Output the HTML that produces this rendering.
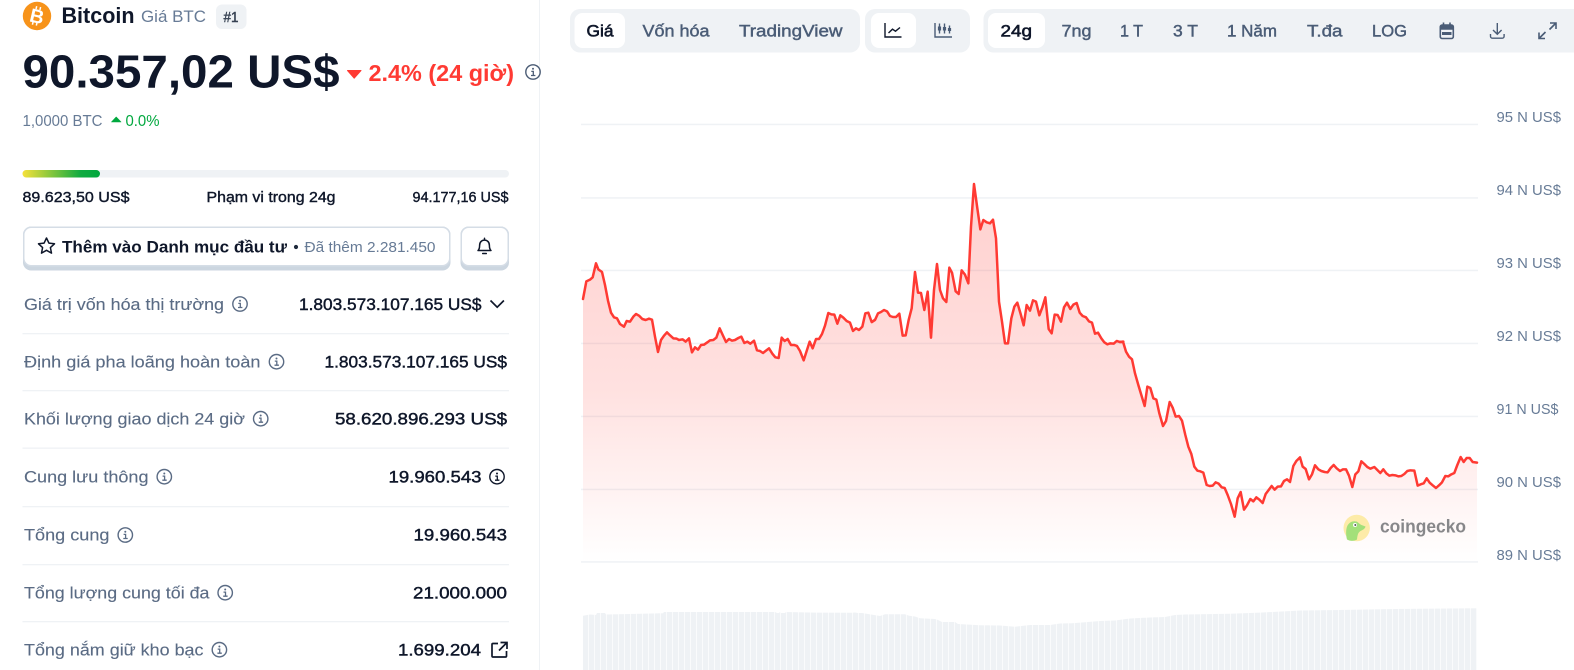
<!DOCTYPE html>
<html lang="vi">
<head>
<meta charset="utf-8">
<title>Bitcoin</title>
<style>
html,body{margin:0;padding:0;background:#fff;width:1574px;height:670px;overflow:hidden}
svg{display:block;font-family:"Liberation Sans",Arial,sans-serif}
.d{fill:#0f172a}
.g{fill:#4b5c75}
.l{fill:#5a6b84;font-size:17px;stroke:#5a6b84;stroke-width:.12}
.v{fill:#0f172a;font-size:17px;stroke:#0f172a;stroke-width:.45}
.t{fill:#4a5c76;font-size:17px;stroke:#4a5c76;stroke-width:.45}
.y{fill:#677b96;font-size:15px}
.ic{fill:none;stroke:#4b5c75;stroke-width:1.5}
</style>
</head>
<body>
<svg width="1574" height="670" viewBox="0 0 1574 670" xmlns="http://www.w3.org/2000/svg">
<defs>
<g id="info"><circle r="7.2" fill="none" stroke-width="1.4"/><path d="M-1.7-.6H.3V3.4M-2 3.5H2.4" fill="none" stroke-width="1.3"/><circle cy="-3.2" r="1" stroke="none"/></g>
<linearGradient id="fg" gradientUnits="userSpaceOnUse" x1="0" y1="185" x2="0" y2="562">
<stop offset="0" stop-color="#ff3a33" stop-opacity=".24"/>
<stop offset=".55" stop-color="#ff3a33" stop-opacity=".15"/>
<stop offset="1" stop-color="#ff3a33" stop-opacity="0"/>
</linearGradient>
<linearGradient id="rg" x1="0" x2="1" y1="0" y2="0"><stop offset="0" stop-color="#f6e13a"/><stop offset=".75" stop-color="#10ab40"/><stop offset="1" stop-color="#00a83e"/></linearGradient>
<pattern id="vb" patternUnits="userSpaceOnUse" x="583" y="0" width="6" height="10"><rect width="5" height="10" fill="#eff2f5"/><rect x="5" width="1" height="10" fill="#fafbfc"/></pattern>
<clipPath id="cc">
<polygon transform="translate(575 170) scale(.33333)" points="24,387 34,334 45,329 53,322 63,280 70,298 81,306 90,345 99,392 108,428 117,442 126,445 135,462 147,470 155,453 165,455 175,440 183,432 192,437 202,447 212,450 222,446 231,449 240,500 249,546 258,510 267,497 276,487 285,496 295,505 305,506 312,510 323,508 332,515 342,505 351,547 360,532 369,539 378,525 387,524 397,517 405,511 415,510 424,503 434,475 444,497 453,516 462,507 471,512 480,510 490,504 499,500 508,519 517,515 526,521 537,512 546,541 555,543 564,549 573,542 582,535 592,551 601,562 611,564 620,503 629,513 638,507 648,525 657,525 666,528 675,543 686,571 695,543 704,515 713,535 723,507 732,507 741,492 750,467 760,429 769,433 778,434 787,461 796,436 805,443 815,453 825,458 834,483 843,475 852,480 862,470 871,430 880,428 890,456 899,450 899,1176 24,1176"/>
<polygon transform="translate(870 170) scale(.33333)" points="6,456 15,450 24,430 33,426 42,420 51,424 60,438 69,441 78,441 88,431 98,497 107,496 116,450 125,415 135,306 144,368 153,369 163,420 173,365 183,503 192,360 201,282 210,360 219,385 229,396 238,293 246,308 257,364 266,372 275,301 285,314 295,340 303,170 312,42 322,115 331,178 340,150 350,157 360,160 369,149 378,205 387,395 396,455 405,520 414,520 424,445 433,410 442,398 452,432 461,466 470,405 480,422 489,391 498,395 508,436 517,412 526,382 536,477 545,490 554,434 563,435 573,455 582,412 591,398 601,417 610,404 620,399 629,428 638,438 648,442 657,454 666,458 675,491 684,488 694,505 703,517 712,523 721,520 731,521 740,513 749,516 760,515 760,1176 6,1176"/>
<polygon transform="translate(1120 330) scale(.33333)" points="0,36 9,35 18,65 27,80 36,88 45,130 55,165 64,195 74,228 82,170 91,174 100,205 109,209 118,250 129,288 138,273 149,216 158,233 167,260 177,258 186,272 196,315 205,350 214,372 223,410 232,422 241,424 250,428 260,465 269,468 278,467 287,457 296,461 305,472 314,474 323,495 333,522 344,560 353,505 362,486 372,539 381,526 391,507 400,514 409,502 418,509 428,519 437,492 446,480 455,468 464,479 473,470 483,469 492,453 501,448 510,456 520,408 529,393 540,382 548,410 557,417 567,448 576,433 585,406 595,418 604,423 614,426 623,427 632,414 641,405 650,415 660,423 669,418 678,418 687,437 697,471 706,433 715,424 724,394 733,402 742,411 751,416 763,411 772,420 781,429 790,418 799,430 808,437 817,435 826,436 835,439 844,438 853,432 862,423 871,421 883,422 893,467 902,463 911,460 920,445 929,458 938,466 948,474 957,466 966,457 976,438 985,439 994,433 1003,429 1012,405 1022,381 1031,396 1040,384 1049,384 1058,396 1071,398 1071,696 0,696"/>
</clipPath>
</defs>

<!-- divider -->
<rect x="539" y="0" width="1" height="670" fill="#eff2f5"/>

<!-- header -->
<circle cx="37" cy="16" r="14.2" fill="#f7931a"/>
<g transform="rotate(13 37 16)" stroke="#fff" stroke-width="1.5">
<path d="M34.5 6.5v3M38.5 6.500v3M34.5 22.500v3M38.500 22.500v3"/>
<text x="30" y="23" font-size="19.500" font-weight="700" fill="#fff" stroke="none">B</text>
</g>
<text x="61.500" y="23" font-size="22" font-weight="700" class="d" textLength="73" lengthAdjust="spacingAndGlyphs">Bitcoin</text>
<text x="141" y="22" font-size="16.500" fill="#677b96" textLength="65" lengthAdjust="spacingAndGlyphs">Giá BTC</text>
<rect x="216" y="4.500" width="30.500" height="24.500" rx="6" fill="#eff2f5"/>
<text x="223.500" y="22" font-size="14.500" fill="#364152" stroke="#364152" stroke-width=".4" textLength="15" lengthAdjust="spacingAndGlyphs">#1</text>

<!-- price -->
<text x="22.500" y="87.300" font-size="46" font-weight="700" class="d" textLength="317" lengthAdjust="spacingAndGlyphs">90.357,02 US$</text>
<path d="M347.500 70.500H361L354.200 78.200Z" fill="#ff3a33" stroke="#ff3a33" stroke-linejoin="round"/>
<text x="368.500" y="81" font-size="23.500" font-weight="700" fill="#ff3a33" textLength="145.500" lengthAdjust="spacingAndGlyphs">2.4% (24 giờ)</text>
<use href="#info" transform="translate(533 72)" fill="#4b5c75" stroke="#4b5c75"/>

<text x="22.500" y="126" font-size="15.500" fill="#677b96" textLength="80" lengthAdjust="spacingAndGlyphs">1,0000 BTC</text>
<path d="M111.500 122H121L116.200 117Z" fill="#00a83e" stroke="#00a83e" stroke-linejoin="round" stroke-width=".6"/>
<text x="125.500" y="126" font-size="15.500" fill="#00a83e" textLength="34" lengthAdjust="spacingAndGlyphs">0.0%</text>

<!-- range -->
<rect x="22.500" y="170" width="486.500" height="7.500" rx="3.750" fill="#eff2f5"/>
<rect x="22.500" y="170" width="77.500" height="7.500" rx="3.750" fill="url(#rg)"/>
<g font-size="15.200" class="d" stroke="#0f172a" stroke-width=".4">
<text x="22.500" y="202" textLength="107" lengthAdjust="spacingAndGlyphs">89.623,50 US$</text>
<text x="206.500" y="202" textLength="129" lengthAdjust="spacingAndGlyphs">Phạm vi trong 24g</text>
<text x="412.500" y="202" textLength="96" lengthAdjust="spacingAndGlyphs">94.177,16 US$</text>
</g>

<!-- buttons -->
<rect x="23" y="226.500" width="427.500" height="44" rx="8" fill="#ccd6e0"/>
<rect x="23.750" y="227.250" width="426" height="38.500" rx="7.500" fill="#fff" stroke="#d5dde6" stroke-width="1.500"/>
<rect x="460.500" y="226.500" width="48.500" height="44" rx="8" fill="#ccd6e0"/>
<rect x="461.250" y="227.250" width="47" height="38.500" rx="7.500" fill="#fff" stroke="#d5dde6" stroke-width="1.500"/>
<path d="M46.500 238l2.400 5.100 5.600.7-4.100 3.800 1.100 5.500-5-2.800-5 2.800 1.100-5.500-4.100-3.800 5.600-.7z" fill="none" stroke="#0f172a" stroke-width="1.500" stroke-linejoin="round"/>
<text x="62" y="252.300" font-size="17" font-weight="700" class="d" textLength="225" lengthAdjust="spacingAndGlyphs">Thêm vào Danh mục đầu tư</text>
<circle cx="296" cy="247" r="2.100" fill="#1f2a3c"/>
<text x="304.500" y="252" font-size="15.200" fill="#677b96" textLength="131" lengthAdjust="spacingAndGlyphs">Đã thêm 2.281.450</text>
<path d="M478 250.500c1.300-1.200 1.600-2.500 1.600-5 0-3.300 2-5.400 4.900-5.400s4.900 2.100 4.900 5.400c0 2.500.3 3.800 1.600 5zM484.500 240v-1.800M482.700 253.500h3.600" fill="none" stroke="#0f172a" stroke-width="1.500" stroke-linejoin="round" stroke-linecap="round"/>

<!-- stats -->
<g fill="#eff2f5">
<rect x="22.500" y="333" width="486.500" height="1.300"/>
<rect x="22.500" y="390" width="486.500" height="1.300"/>
<rect x="22.500" y="447.500" width="486.500" height="1.300"/>
<rect x="22.500" y="506" width="486.500" height="1.300"/>
<rect x="22.500" y="564" width="486.500" height="1.300"/>
<rect x="22.500" y="621" width="486.500" height="1.300"/>
</g>
<g fill="#5a6b84" stroke="#5a6b84">
<use href="#info" transform="translate(240 304)"/>
<use href="#info" transform="translate(276.500 361.700)"/>
<use href="#info" transform="translate(260.700 418.700)"/>
<use href="#info" transform="translate(164.300 476.700)"/>
<use href="#info" transform="translate(125.300 535)"/>
<use href="#info" transform="translate(225.200 592.700)"/>
<use href="#info" transform="translate(219.400 649.700)"/>
</g>
<text class="l" x="24" y="310" textLength="200" lengthAdjust="spacingAndGlyphs">Giá trị vốn hóa thị trường</text>
<text class="l" x="24" y="367.500" textLength="236.500" lengthAdjust="spacingAndGlyphs">Định giá pha loãng hoàn toàn</text>
<text class="l" x="24" y="424.500" textLength="221" lengthAdjust="spacingAndGlyphs">Khối lượng giao dịch 24 giờ</text>
<text class="l" x="24" y="482.500" textLength="124.500" lengthAdjust="spacingAndGlyphs">Cung lưu thông</text>
<text class="l" x="24" y="540.500" textLength="85.500" lengthAdjust="spacingAndGlyphs">Tổng cung</text>
<text class="l" x="24" y="598.500" textLength="185.500" lengthAdjust="spacingAndGlyphs">Tổng lượng cung tối đa</text>
<text class="l" x="24" y="655.500" textLength="179.500" lengthAdjust="spacingAndGlyphs">Tổng nắm giữ kho bạc</text>

<text class="v" x="299" y="310" textLength="182.500" lengthAdjust="spacingAndGlyphs">1.803.573.107.165 US$</text>
<text class="v" x="324.500" y="367.500" textLength="182.500" lengthAdjust="spacingAndGlyphs">1.803.573.107.165 US$</text>
<text class="v" x="335" y="424.500" textLength="172" lengthAdjust="spacingAndGlyphs">58.620.896.293 US$</text>
<text class="v" x="388.500" y="482.500" textLength="93" lengthAdjust="spacingAndGlyphs">19.960.543</text>
<text class="v" x="413.500" y="540.500" textLength="93.500" lengthAdjust="spacingAndGlyphs">19.960.543</text>
<text class="v" x="413" y="598.500" textLength="94" lengthAdjust="spacingAndGlyphs">21.000.000</text>
<text class="v" x="398" y="655.500" textLength="83" lengthAdjust="spacingAndGlyphs">1.699.204</text>

<path d="M490.500 300.500l6.700 6.700 6.700-6.700" fill="none" stroke="#0f172a" stroke-width="1.700"/>
<use href="#info" transform="translate(497 476.700)" fill="#0f172a" stroke="#0f172a"/>
<path d="M498 643.500h-5a1 1 0 0 0-1 1v11.500a1 1 0 0 0 1 1h12.500a1 1 0 0 0 1-1v-5M500.500 642.500h6.500v6.500M507 642.500l-8 8" fill="none" stroke="#0f172a" stroke-width="1.700"/>

<!-- tabs -->
<rect x="570" y="9" width="290" height="43.500" rx="10" fill="#eff2f5"/>
<rect x="574.500" y="13" width="50.500" height="35" rx="8" fill="#fff"/>
<text x="586.500" y="36.500" font-size="17" class="d" stroke="#0f172a" stroke-width=".6" textLength="27" lengthAdjust="spacingAndGlyphs">Giá</text>
<text class="t" x="642.500" y="36.500" textLength="67" lengthAdjust="spacingAndGlyphs">Vốn hóa</text>
<text class="t" x="739" y="36.500" textLength="103.500" lengthAdjust="spacingAndGlyphs">TradingView</text>

<rect x="865" y="9" width="105" height="43.500" rx="10" fill="#eff2f5"/>
<rect x="871" y="13" width="45" height="35" rx="8" fill="#fff"/>
<path d="M885 23v14h16.500M888.500 33l4-3.800 3 2 4.500-3.700" fill="none" stroke="#0f172a" stroke-width="1.400"/>
<g fill="none" stroke="#4a5c76" stroke-width="1.400">
<path d="M935 23v14h17"/>
<path d="M939.500 23.500v10M944.500 23.500v10M949.500 25.500v8"/>
<path d="M939.500 26.500v4M944.500 27v3.500M949.500 28v3" stroke-width="3.200"/>
</g>

<rect x="983.500" y="9" width="600" height="43.500" rx="10" fill="#eff2f5"/>
<rect x="988" y="13" width="57" height="35" rx="8" fill="#fff"/>
<text x="1000.500" y="36.500" font-size="17" class="d" stroke="#0f172a" stroke-width=".6" textLength="31.500" lengthAdjust="spacingAndGlyphs">24g</text>
<text class="t" x="1061.500" y="36.500" textLength="30" lengthAdjust="spacingAndGlyphs">7ng</text>
<text class="t" x="1120" y="36.500" textLength="23" lengthAdjust="spacingAndGlyphs">1 T</text>
<text class="t" x="1173" y="36.500" textLength="25" lengthAdjust="spacingAndGlyphs">3 T</text>
<text class="t" x="1227" y="36.500" textLength="50" lengthAdjust="spacingAndGlyphs">1 Năm</text>
<text class="t" x="1307" y="36.500" textLength="35.500" lengthAdjust="spacingAndGlyphs">T.đa</text>
<text class="t" x="1372" y="36.500" textLength="35" lengthAdjust="spacingAndGlyphs">LOG</text>
<g fill="none" stroke="#4a5c76" stroke-width="1.600">
<rect x="1440.300" y="25" width="13" height="13.500" rx="1.800"/>
<path d="M1440.300 27.500h13" stroke-width="4.500"/>
<path d="M1443.500 22.500v3M1450 22.500v3"/>
<path d="M1442 33.500h9.500" stroke-width="3"/>
<path d="M1497.300 23v11M1493 30l4.300 4.300 4.300-4.300M1490.500 34v2.200a2 2 0 0 0 2 2h9.600a2 2 0 0 0 2-2V34" stroke-width="1.400"/>
<path d="M1550 23h6v6M1556 23l-6.500 6.500M1539 32.500v6h6M1539 38.500l6.500-6.500" stroke-width="1.600"/>
</g>

<!-- chart grid -->
<g fill="#eff2f5">
<rect x="581" y="123.700" width="897" height="1.500"/>
<rect x="581" y="197.200" width="897" height="1.500"/>
<rect x="581" y="269.700" width="897" height="1.500"/>
<rect x="581" y="342.700" width="897" height="1.500"/>
<rect x="581" y="415.700" width="897" height="1.500"/>
<rect x="581" y="488.700" width="897" height="1.500"/>
<rect x="581" y="561.200" width="897" height="1.500"/>
</g>
<text class="y" x="1496.500" y="122" textLength="64.500" lengthAdjust="spacingAndGlyphs">95 N US$</text>
<text class="y" x="1496.500" y="195" textLength="64.500" lengthAdjust="spacingAndGlyphs">94 N US$</text>
<text class="y" x="1496.500" y="268" textLength="64.500" lengthAdjust="spacingAndGlyphs">93 N US$</text>
<text class="y" x="1496.500" y="341" textLength="64.500" lengthAdjust="spacingAndGlyphs">92 N US$</text>
<text class="y" x="1496.500" y="414" textLength="62" lengthAdjust="spacingAndGlyphs">91 N US$</text>
<text class="y" x="1496.500" y="487" textLength="64.500" lengthAdjust="spacingAndGlyphs">90 N US$</text>
<text class="y" x="1496.500" y="560" textLength="64.500" lengthAdjust="spacingAndGlyphs">89 N US$</text>

<!-- area -->
<rect x="583" y="180" width="895" height="382" fill="url(#fg)" clip-path="url(#cc)"/>
<g fill="none" stroke="#ff3a33" stroke-width="7.500" stroke-linejoin="round" stroke-linecap="round">
<polyline transform="translate(575 170) scale(.33333)" points="24,387 34,334 45,329 53,322 63,280 70,298 81,306 90,345 99,392 108,428 117,442 126,445 135,462 147,470 155,453 165,455 175,440 183,432 192,437 202,447 212,450 222,446 231,449 240,500 249,546 258,510 267,497 276,487 285,496 295,505 305,506 312,510 323,508 332,515 342,505 351,547 360,532 369,539 378,525 387,524 397,517 405,511 415,510 424,503 434,475 444,497 453,516 462,507 471,512 480,510 490,504 499,500 508,519 517,515 526,521 537,512 546,541 555,543 564,549 573,542 582,535 592,551 601,562 611,564 620,503 629,513 638,507 648,525 657,525 666,528 675,543 686,571 695,543 704,515 713,535 723,507 732,507 741,492 750,467 760,429 769,433 778,434 787,461 796,436 805,443 815,453 825,458 834,483 843,475 852,480 862,470 871,430 880,428 890,456 899,450"/>
<polyline transform="translate(870 170) scale(.33333)" points="6,456 15,450 24,430 33,426 42,420 51,424 60,438 69,441 78,441 88,431 98,497 107,496 116,450 125,415 135,306 144,368 153,369 163,420 173,365 183,503 192,360 201,282 210,360 219,385 229,396 238,293 246,308 257,364 266,372 275,301 285,314 295,340 303,170 312,42 322,115 331,178 340,150 350,157 360,160 369,149 378,205 387,395 396,455 405,520 414,520 424,445 433,410 442,398 452,432 461,466 470,405 480,422 489,391 498,395 508,436 517,412 526,382 536,477 545,490 554,434 563,435 573,455 582,412 591,398 601,417 610,404 620,399 629,428 638,438 648,442 657,454 666,458 675,491 684,488 694,505 703,517 712,523 721,520 731,521 740,513 749,516 760,515"/>
<polyline transform="translate(1120 330) scale(.33333)" points="0,36 9,35 18,65 27,80 36,88 45,130 55,165 64,195 74,228 82,170 91,174 100,205 109,209 118,250 129,288 138,273 149,216 158,233 167,260 177,258 186,272 196,315 205,350 214,372 223,410 232,422 241,424 250,428 260,465 269,468 278,467 287,457 296,461 305,472 314,474 323,495 333,522 344,560 353,505 362,486 372,539 381,526 391,507 400,514 409,502 418,509 428,519 437,492 446,480 455,468 464,479 473,470 483,469 492,453 501,448 510,456 520,408 529,393 540,382 548,410 557,417 567,448 576,433 585,406 595,418 604,423 614,426 623,427 632,414 641,405 650,415 660,423 669,418 678,418 687,437 697,471 706,433 715,424 724,394 733,402 742,411 751,416 763,411 772,420 781,429 790,418 799,430 808,437 817,435 826,436 835,439 844,438 853,432 862,423 871,421 883,422 893,467 902,463 911,460 920,445 929,458 938,466 948,474 957,466 966,457 976,438 985,439 994,433 1003,429 1012,405 1022,381 1031,396 1040,384 1049,384 1058,396 1071,398"/>
</g>

<!-- watermark -->
<circle cx="1356.700" cy="528" r="13.200" fill="#fdeba8"/>
<path d="M1347 539.500c-1-4-1.500-10 .5-14 2-3.500 5.500-5 9-4 1.500.5 3 2.500 5 3.500l4 1.500c-.5 2.500-3 3.500-5 4.500-2.500 1.500-3 4-3.500 8.500-3.500 2-7.500 1.500-10 0z" fill="#a3e07a"/>
<circle cx="1355" cy="525" r="2" fill="#fff"/>
<circle cx="1355.300" cy="525" r="1" fill="#555"/>
<text x="1380" y="532.500" font-size="18.500" font-weight="700" fill="#87878a" textLength="86" lengthAdjust="spacingAndGlyphs">coingecko</text>

<!-- volume -->
<polygon fill="url(#vb)" points="583,615.700 590,614.500 596,615 597,613 605,613 606,614.500 663,613.300 664,612 775,612 777,613 779,613 780,612 781,613 785,613 786,612 815,612.600 852,612.800 855,612.500 858,613 862,613 880,616 885,614.300 905,614.300 909,615.700 915,616.500 920,618.300 935,619 938,620 942,622 950,622 955,622 958,624 980,625.300 1000,625.500 1015,626.700 1030,625 1050,625 1060,623.500 1072,623.300 1085,622.300 1100,621 1115,620.500 1130,618.500 1150,617.500 1165,617 1175,615 1185,614.500 1200,614.300 1230,613.800 1260,612.600 1300,610.500 1340,610 1380,609.200 1420,608.800 1477,608.300 1477,670 583,670"/>
</svg>
</body>
</html>
